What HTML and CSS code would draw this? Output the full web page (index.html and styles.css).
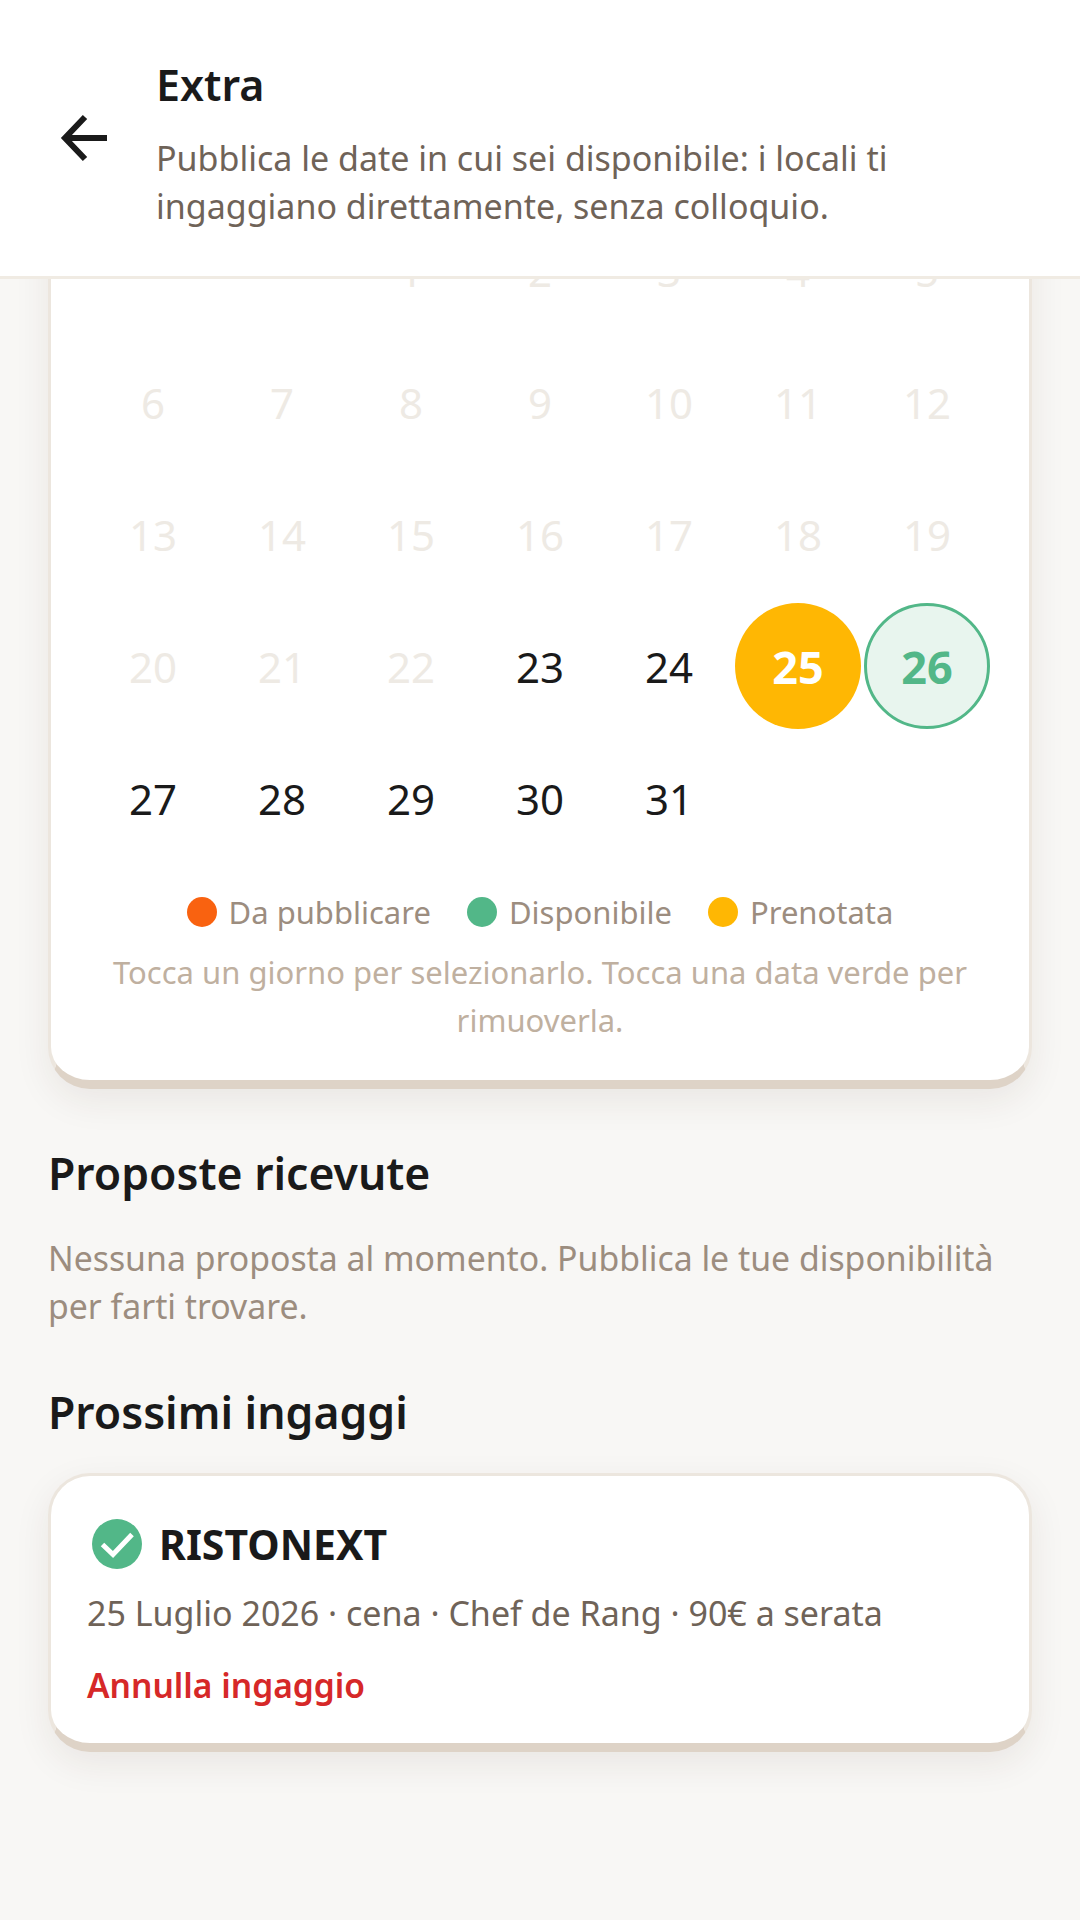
FILE: index.html
```html
<!DOCTYPE html>
<html lang="it">
<head>
<meta charset="utf-8">
<title>Extra</title>
<link rel="stylesheet" href="styles.css">
</head>
<body>
<div class="app">
  <header class="topbar">
    <svg class="back" viewBox="0 0 48 48" fill="none" stroke="currentColor" stroke-width="6" stroke-linecap="butt" stroke-linejoin="miter"><path d="M47 24H5"/><path d="M25 3 5 24l20 21"/></svg>
    <div class="topbar-text">
      <h1>Extra</h1>
      <p>Pubblica le date in cui sei disponibile: i locali ti ingaggiano direttamente, senza colloquio.</p>
    </div>
  </header>
  <main class="scroller">
    <section class="card calendar">
      <div class="days">
        <span></span><span></span>
        <span class="day off">1</span><span class="day off">2</span><span class="day off">3</span><span class="day off">4</span><span class="day off">5</span>
        <span class="day off">6</span><span class="day off">7</span><span class="day off">8</span><span class="day off">9</span><span class="day off">10</span><span class="day off">11</span><span class="day off">12</span>
        <span class="day off">13</span><span class="day off">14</span><span class="day off">15</span><span class="day off">16</span><span class="day off">17</span><span class="day off">18</span><span class="day off">19</span>
        <span class="day off">20</span><span class="day off">21</span><span class="day off">22</span><span class="day">23</span><span class="day">24</span><span class="day booked">25</span><span class="day free">26</span>
        <span class="day">27</span><span class="day">28</span><span class="day">29</span><span class="day">30</span><span class="day">31</span>
      </div>
      <div class="legend">
        <span class="legend-item"><i class="dot orange"></i>Da pubblicare</span>
        <span class="legend-item"><i class="dot green"></i>Disponibile</span>
        <span class="legend-item"><i class="dot yellow"></i>Prenotata</span>
      </div>
      <p class="hint">Tocca un giorno per selezionarlo. Tocca una data verde per rimuoverla.</p>
    </section>
    <h2 class="first">Proposte ricevute</h2>
    <p class="empty">Nessuna proposta al momento. Pubblica le tue disponibilità per farti trovare.</p>
    <h2 class="second">Prossimi ingaggi</h2>
    <section class="card job">
      <div class="job-head">
        <svg class="check" viewBox="0 0 24 24"><circle cx="12" cy="12" r="10" fill="#52b788"/><path d="M6.2 12.2l4.2 4 7.6-8" fill="none" stroke="#fff" stroke-width="2"/></svg>
        <strong>RISTONEXT</strong>
      </div>
      <p class="job-info">25 Luglio 2026 · cena · Chef de Rang · 90€ a serata</p>
      <a class="cancel">Annulla ingaggio</a>
    </section>
  </main>
</div>
</body>
</html>
```
FILE: styles.css
```css
* { box-sizing: border-box; }
html, body { margin: 0; padding: 0; }
body { font-family: "Noto Sans", "Open Sans", sans-serif; color: #1a1a1a; background: #f8f7f5; }
.app { width: 1080px; height: 1920px; display: flex; flex-direction: column; overflow: hidden; }

.topbar { height: 279px; flex: none; display: flex; align-items: center; background: #fff; border-bottom: 3px solid #f0ebe3; padding: 0 48px 0 60px; position: relative; z-index: 2; }
.back { width: 48px; height: 48px; flex: none; margin-right: 48px; color: #1a1a1a; }
.topbar-text { padding-top: 12px; }
.topbar-text h1 { margin: 0 0 22px; font-size: 43px; line-height: 54px; font-weight: 600; }
.topbar-text p { margin: 0; font-size: 34px; line-height: 48px; color: #6f6358; }

.scroller { flex: 1; overflow: hidden; padding: 0 48px; }
.card { background: #fff; border: 3px solid #ece6de; border-bottom: 9px solid #ded3c7; border-radius: 42px; box-shadow: 0 12px 36px rgba(60, 40, 20, .08); }

.calendar { margin-top: -115px; padding: 40px 39px 36px; }
.days { display: grid; grid-template-columns: repeat(7, 126px); grid-auto-rows: 126px; column-gap: 3px; row-gap: 6px; }
.day { display: flex; align-items: center; justify-content: center; border-radius: 50%; font-size: 42px; }
.off { color: #eeeae4; }
.booked { background: #ffb703; color: #fff; font-weight: 700; font-size: 45px; }
.free { background: #e8f5ee; border: 3px solid #52b788; color: #52b788; font-weight: 700; font-size: 45px; }

.legend { display: flex; justify-content: center; gap: 36px; margin-top: 27px; font-size: 31px; line-height: 48px; color: #9c8d7f; }
.legend-item { display: flex; align-items: center; gap: 12px; }
.dot { width: 30px; height: 30px; border-radius: 50%; }
.orange { background: #f96210; }
.green { background: #52b788; }
.yellow { background: #ffb703; }
.hint { margin: 12px 0 0; text-align: center; font-size: 31px; line-height: 48px; color: #bfb0a0; }

h2 { margin: 0; font-size: 44.5px; line-height: 54px; font-weight: 600; }
h2.first { margin-top: 57px; }
h2.second { margin-top: 55px; }
.empty { margin: 34px 0 0; font-size: 33.8px; line-height: 48px; color: #9c8d7f; }

.job { margin-top: 34px; padding: 38px 36px 34px; }
.job-head { display: flex; align-items: center; gap: 12px; }
.check { width: 60px; height: 60px; flex: none; }
.job-head strong { font-size: 41px; line-height: 54px; font-weight: 700; }
.job-info { margin: 15px 0 0; font-size: 34px; line-height: 48px; color: #6f6358; }
.cancel { display: block; margin-top: 24px; font-size: 33.6px; line-height: 48px; font-weight: 600; color: #d62828; }
```
